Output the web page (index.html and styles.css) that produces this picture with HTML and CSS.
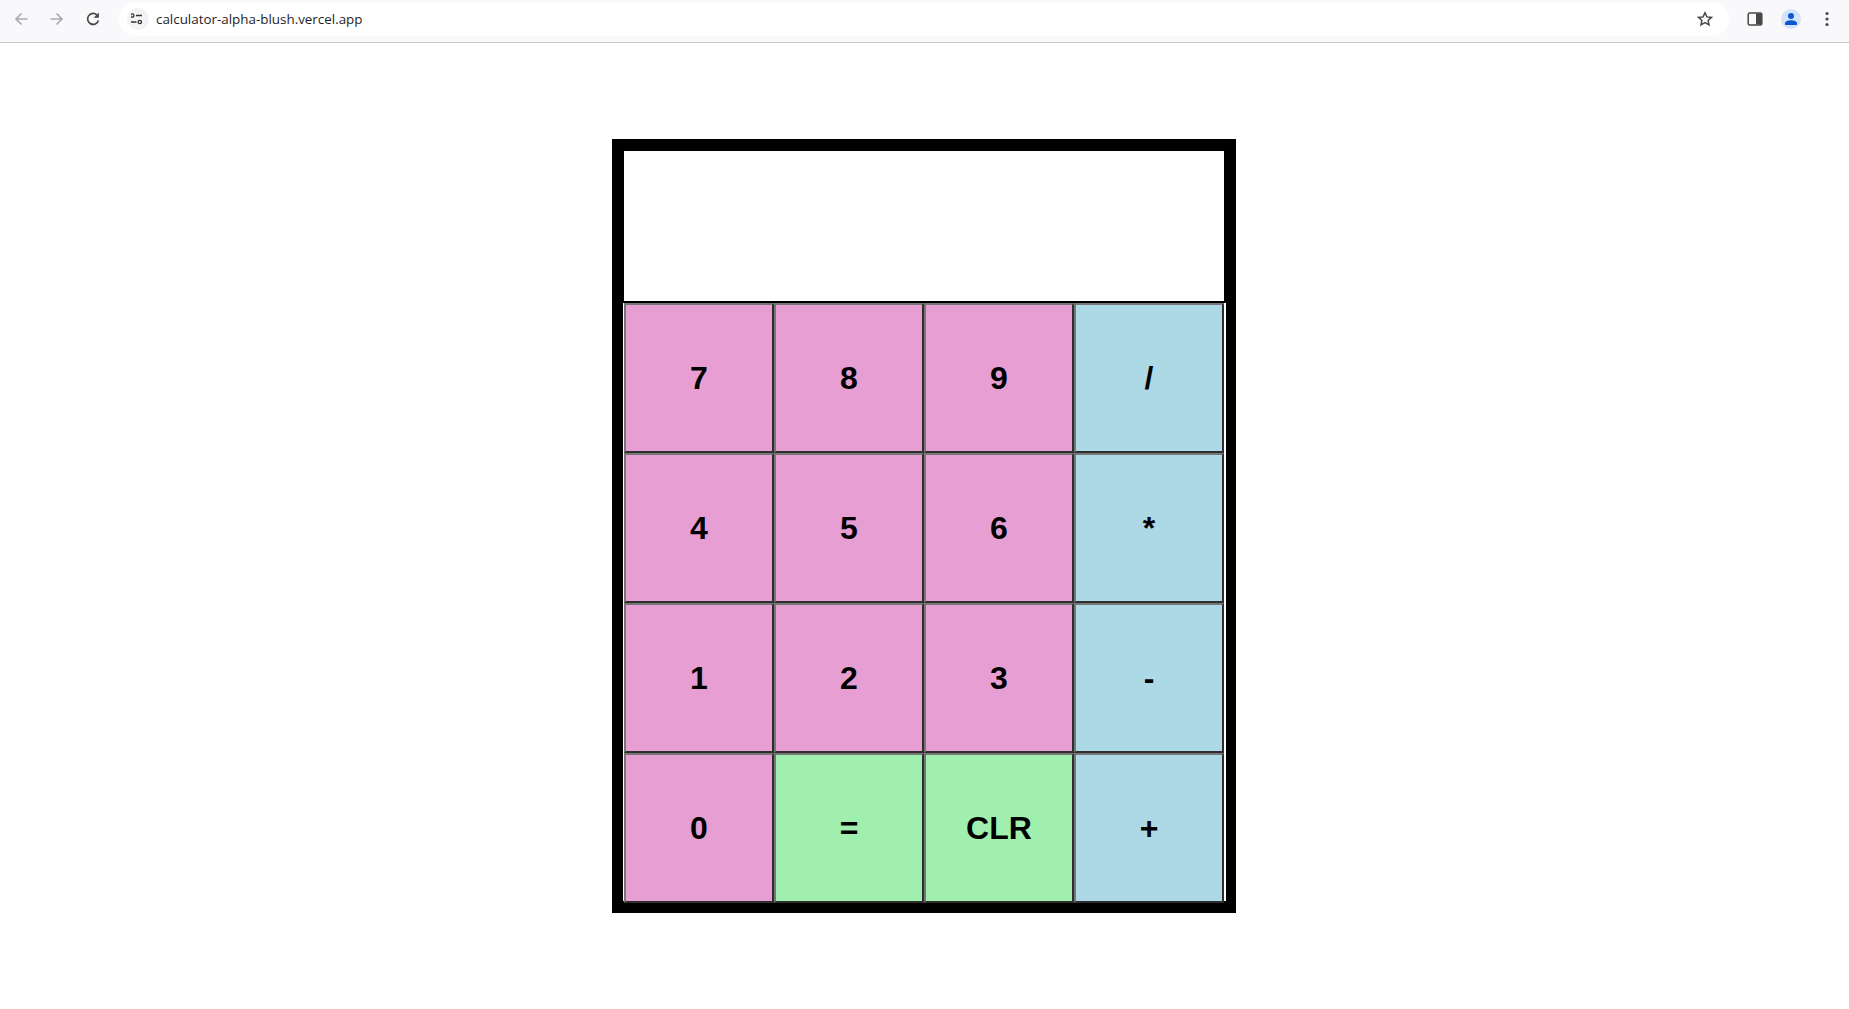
FILE: index.html
```html
<!DOCTYPE html>
<html lang="en">

<head>
    <meta charset="UTF-8">
    <meta name="viewport" content="width=device-width, initial-scale=1.0">
    <title>Calculator</title>
    <link rel="stylesheet" href="styles.css">
</head>

<body>
    <div class="toolbar">
        <svg class="back-icon" width="16" height="16" viewBox="0 0 16 16"><path d="M14.500 8H3M8.500 2.500 3 8l5.500 5.500" fill="none" stroke="#a9abad" stroke-width="1.700"/></svg>
        <svg class="forward-icon" width="16" height="16" viewBox="0 0 16 16"><path d="M1.500 8H13M7.500 2.500 13 8l-5.500 5.500" fill="none" stroke="#a9abad" stroke-width="1.700"/></svg>
        <svg class="reload-icon" width="16" height="16" viewBox="0 0 16 16"><path d="M13.400 9.500A5.500 5.500 0 1 1 11.800 3.800" fill="none" stroke="#474747" stroke-width="1.700"/><path d="M13.900 1.500v5.300H8.600z" fill="#474747"/></svg>
        <div class="omnibox">
            <span class="site-icon">
                <svg width="14" height="14" viewBox="2 0 14 14"><circle cx="3.200" cy="3.500" r="1.700" fill="none" stroke="#333" stroke-width="1.300"/><path d="M7 3.500h6M1 10h6.500" stroke="#333" stroke-width="1.500"/><circle cx="10.800" cy="10" r="1.700" fill="none" stroke="#333" stroke-width="1.300"/></svg>
            </span>
            <span class="url">calculator-alpha-blush.vercel.app</span>
            <svg class="star" width="16" height="16" viewBox="0 0 16 16"><path d="M8 1.800l1.900 4.100 4.500.5-3.300 3 .9 4.500L8 11.700l-4 2.200.9-4.500-3.300-3 4.500-.5z" fill="none" stroke="#474747" stroke-width="1.500"/></svg>
        </div>
        <svg class="panel-icon" width="16" height="16" viewBox="0 0 16 16"><rect x="1.200" y="2" width="13.600" height="12" rx="1.500" fill="none" stroke="#474747" stroke-width="1.500"/><rect x="9" y="2.500" width="5.500" height="11" fill="#474747"/></svg>
        <span class="avatar">
            <svg width="16" height="16" viewBox="0 0 16 16"><circle cx="8" cy="5" r="3" fill="#0b57d0"/><path d="M2 14v-1.500C2 10.500 5 9.300 8 9.300s6 1.200 6 3.200V14z" fill="#0b57d0"/></svg>
        </span>
        <svg class="menu-icon" width="4" height="16" viewBox="0 0 4 16"><circle cx="2" cy="2.500" r="1.600" fill="#474747"/><circle cx="2" cy="8" r="1.600" fill="#474747"/><circle cx="2" cy="13.500" r="1.600" fill="#474747"/></svg>
    </div>

    <div class="page">
        <div class="calculator">
            <div class="display"></div>
            <div class="keys">
                <button class="key num">7</button>
                <button class="key num">8</button>
                <button class="key num">9</button>
                <button class="key op">/</button>
                <button class="key num">4</button>
                <button class="key num">5</button>
                <button class="key num">6</button>
                <button class="key op">*</button>
                <button class="key num">1</button>
                <button class="key num">2</button>
                <button class="key num">3</button>
                <button class="key op">-</button>
                <button class="key num">0</button>
                <button class="key eq">=</button>
                <button class="key eq">CLR</button>
                <button class="key op">+</button>
            </div>
        </div>
    </div>
</body>

</html>
```

FILE: styles.css
```css
body {
    margin: 0;
    background-color: #fff;
    font-family: 'Liberation Sans', Arial, sans-serif;
}

.toolbar {
    height: 42px;
    background-color: #f9f9fb;
    border-bottom: 1px solid #c8c8ca;
    display: flex;
    align-items: center;
    padding-left: 13px;
    padding-right: 20px;
}

.back-icon,
.forward-icon {
    margin-right: 20px;
}

.back-icon,
.forward-icon,
.reload-icon,
.panel-icon,
.menu-icon {
    margin-top: -4px;
}

.omnibox {
    flex: 1;
    height: 34px;
    margin-left: 18px;
    margin-top: -4px;
    background-color: #fff;
    border-radius: 17px;
    display: flex;
    align-items: center;
    padding-left: 8px;
    padding-right: 16px;
}

.site-icon {
    width: 22px;
    height: 22px;
    border-radius: 50%;
    background-color: #f3f3f5;
    display: flex;
    align-items: center;
    justify-content: center;
}

.url {
    margin-left: 7px;
    font-family: 'Open Sans', sans-serif;
    font-size: 13.4px;
    color: #1f1f1f;
}

.star {
    margin-left: auto;
}

.panel-icon {
    margin-left: 18px;
}

.avatar {
    width: 20px;
    height: 20px;
    margin-left: 18px;
    margin-top: -4px;
    border-radius: 50%;
    background-color: #d3e3fd;
    display: flex;
    align-items: center;
    justify-content: center;
}

.menu-icon {
    margin-left: 24px;
}

.page {
    display: flex;
    justify-content: center;
    padding-top: 96px;
    padding-right: 1px;
}

.calculator {
    width: 600px;
    border: 12px solid #000;
    background-color: #000;
}

.display {
    height: 150px;
    background-color: #fff;
}

.keys {
    display: grid;
    grid-template-columns: repeat(4, 150px);
    grid-auto-rows: 150px;
    width: 600px;
    height: 598px;
    margin-top: 2px;
    margin-left: -1px;
    padding: 0 2px 0 1px;
    background-color: #fff;
}

.key {
    font-family: 'Liberation Sans', Arial, sans-serif;
    font-size: 32px;
    font-weight: bold;
    color: #000;
    padding: 0;
    border: 2px solid;
    border-color: #767676 #2e2e2e #2e2e2e #767676;
}

.num {
    background-color: #e79fd3;
}

.op {
    background-color: #add8e6;
}

.eq {
    background-color: #a0efae;
}
```
